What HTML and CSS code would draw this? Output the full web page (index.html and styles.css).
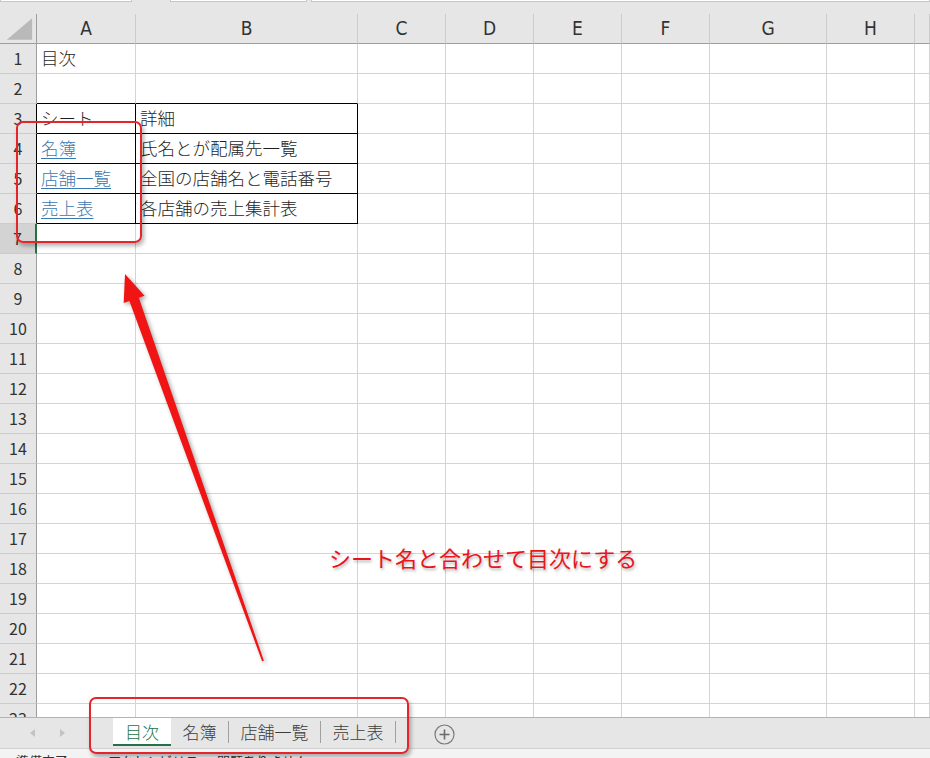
FILE: index.html
```html
<!DOCTYPE html>
<html lang="ja">
<head>
<meta charset="utf-8">
<title>目次</title>
<link rel="stylesheet" href="styles.css">
</head>
<body>
<div class="app">
  <div class="topbar">
    <div class="box name"></div>
    <div class="box fx1"></div>
    <div class="box fx2"></div>
  </div>

  <div class="sheet">
    <div class="h corner"><svg width="37" height="30" viewBox="0 0 37 30"><polygon points="33,4 33,26 7,26" fill="#b9b9b9"/></svg></div>
    <div class="h">A</div><div class="h">B</div><div class="h">C</div><div class="h">D</div><div class="h">E</div><div class="h">F</div><div class="h">G</div><div class="h">H</div><div class="h"></div>

    <div class="r">1</div><div class="c">目次</div><div class="c"></div><div class="c"></div><div class="c"></div><div class="c"></div><div class="c"></div><div class="c"></div><div class="c"></div><div class="c"></div>
    <div class="r">2</div><div class="c bb"></div><div class="c bb"></div><div class="c"></div><div class="c"></div><div class="c"></div><div class="c"></div><div class="c"></div><div class="c"></div><div class="c"></div>
    <div class="r rb">3</div><div class="c bb br">シート</div><div class="c bb br">詳細</div><div class="c"></div><div class="c"></div><div class="c"></div><div class="c"></div><div class="c"></div><div class="c"></div><div class="c"></div>
    <div class="r rb">4</div><div class="c bb br"><a class="link" href="#">名簿</a></div><div class="c bb br">氏名とが配属先一覧</div><div class="c"></div><div class="c"></div><div class="c"></div><div class="c"></div><div class="c"></div><div class="c"></div><div class="c"></div>
    <div class="r rb">5</div><div class="c bb br"><a class="link" href="#">店舗一覧</a></div><div class="c bb br">全国の店舗名と電話番号</div><div class="c"></div><div class="c"></div><div class="c"></div><div class="c"></div><div class="c"></div><div class="c"></div><div class="c"></div>
    <div class="r rb">6</div><div class="c bb br"><a class="link" href="#">売上表</a></div><div class="c bb br">各店舗の売上集計表</div><div class="c"></div><div class="c"></div><div class="c"></div><div class="c"></div><div class="c"></div><div class="c"></div><div class="c"></div>
    <div class="r sel">7</div><div class="c"></div><div class="c"></div><div class="c"></div><div class="c"></div><div class="c"></div><div class="c"></div><div class="c"></div><div class="c"></div><div class="c"></div>
    <div class="r">8</div><div class="c"></div><div class="c"></div><div class="c"></div><div class="c"></div><div class="c"></div><div class="c"></div><div class="c"></div><div class="c"></div><div class="c"></div>
    <div class="r">9</div><div class="c"></div><div class="c"></div><div class="c"></div><div class="c"></div><div class="c"></div><div class="c"></div><div class="c"></div><div class="c"></div><div class="c"></div>
    <div class="r">10</div><div class="c"></div><div class="c"></div><div class="c"></div><div class="c"></div><div class="c"></div><div class="c"></div><div class="c"></div><div class="c"></div><div class="c"></div>
    <div class="r">11</div><div class="c"></div><div class="c"></div><div class="c"></div><div class="c"></div><div class="c"></div><div class="c"></div><div class="c"></div><div class="c"></div><div class="c"></div>
    <div class="r">12</div><div class="c"></div><div class="c"></div><div class="c"></div><div class="c"></div><div class="c"></div><div class="c"></div><div class="c"></div><div class="c"></div><div class="c"></div>
    <div class="r">13</div><div class="c"></div><div class="c"></div><div class="c"></div><div class="c"></div><div class="c"></div><div class="c"></div><div class="c"></div><div class="c"></div><div class="c"></div>
    <div class="r">14</div><div class="c"></div><div class="c"></div><div class="c"></div><div class="c"></div><div class="c"></div><div class="c"></div><div class="c"></div><div class="c"></div><div class="c"></div>
    <div class="r">15</div><div class="c"></div><div class="c"></div><div class="c"></div><div class="c"></div><div class="c"></div><div class="c"></div><div class="c"></div><div class="c"></div><div class="c"></div>
    <div class="r">16</div><div class="c"></div><div class="c"></div><div class="c"></div><div class="c"></div><div class="c"></div><div class="c"></div><div class="c"></div><div class="c"></div><div class="c"></div>
    <div class="r">17</div><div class="c"></div><div class="c"></div><div class="c"></div><div class="c"></div><div class="c"></div><div class="c"></div><div class="c"></div><div class="c"></div><div class="c"></div>
    <div class="r">18</div><div class="c"></div><div class="c"></div><div class="c"></div><div class="c"></div><div class="c"></div><div class="c"></div><div class="c"></div><div class="c"></div><div class="c"></div>
    <div class="r">19</div><div class="c"></div><div class="c"></div><div class="c"></div><div class="c"></div><div class="c"></div><div class="c"></div><div class="c"></div><div class="c"></div><div class="c"></div>
    <div class="r">20</div><div class="c"></div><div class="c"></div><div class="c"></div><div class="c"></div><div class="c"></div><div class="c"></div><div class="c"></div><div class="c"></div><div class="c"></div>
    <div class="r">21</div><div class="c"></div><div class="c"></div><div class="c"></div><div class="c"></div><div class="c"></div><div class="c"></div><div class="c"></div><div class="c"></div><div class="c"></div>
    <div class="r">22</div><div class="c"></div><div class="c"></div><div class="c"></div><div class="c"></div><div class="c"></div><div class="c"></div><div class="c"></div><div class="c"></div><div class="c"></div>
    <div class="r">23</div><div class="c"></div><div class="c"></div><div class="c"></div><div class="c"></div><div class="c"></div><div class="c"></div><div class="c"></div><div class="c"></div><div class="c"></div>
  </div>

  <div class="tabbar">
    <div class="nav"><span class="tri left"></span><span class="tri right"></span></div>
    <div class="tabs">
      <div class="tab active">目次</div>
      <div class="tab">名簿</div><div class="sep"></div>
      <div class="tab">店舗一覧</div><div class="sep"></div>
      <div class="tab">売上表</div><div class="sep"></div>
    </div>
    <div class="add"><svg width="21" height="21" viewBox="0 0 21 21"><circle cx="10.5" cy="10.5" r="9.5" fill="none" stroke="#7a7a7a" stroke-width="1.2"/><path d="M10.5 5.5v10M5.5 10.5h10" stroke="#6a6a6a" stroke-width="1.6"/></svg></div>
  </div>

  <div class="status"><span class="st1">準備完了</span><span class="st2">アクセシビリティ: 問題ありません</span></div>

  <svg class="arrow" width="930" height="758" viewBox="0 0 930 758">
    <polygon points="125,274 144.5,295.7 138.8,297.7 263.9,660.7 262.1,661.3 129.4,301.1 123.7,303.1" fill="#f01414"/>
  </svg>
  <div class="callout c1"></div>
  <div class="callout c2"></div>
  <div class="note">シート名と合わせて目次にする</div>
</div>
</body>
</html>
```

FILE: styles.css
```css
* { box-sizing: border-box; }
html, body { margin: 0; padding: 0; }
body {
  width: 930px;
  height: 758px;
  overflow: hidden;
  background: #e6e6e6;
  font-family: "Noto Sans CJK JP", "Noto Sans", sans-serif;
}
.app {
  position: relative;
  display: flex;
  flex-direction: column;
  height: 758px;
}

/* top formula strip */
.topbar {
  height: 14px;
  display: flex;
  background: #e6e6e6;
}
.box {
  height: 2px;
  background: #fff;
  border: 1px solid #c6c6c6;
  border-top: none;
}
.name { width: 132px; }
.fx1 { width: 137px; margin-left: 38px; }
.fx2 { flex: 1; margin-left: 4px; }

/* sheet grid */
.sheet {
  height: 703px;
  overflow: hidden;
  display: grid;
  grid-template-columns: 37px 99px 222px 88px 88px 88px 88px 117px 88px 1fr;
  grid-auto-rows: 30px;
  align-content: start;
  background: #fff;
}
.h {
  background: #e6e6e6;
  border-right: 1px solid #cbcbcb;
  border-bottom: 1px solid #9e9e9e;
  display: flex;
  align-items: center;
  justify-content: center;
  font-family: "Liberation Sans Narrow", "DejaVu Sans Condensed", "Liberation Sans", sans-serif;
  font-size: 19px;
  color: #333;
  padding-bottom: 1px;
}
.corner { border-right-color: #9e9e9e; padding: 0; }
.corner svg { display: block; }
.r {
  background: #e6e6e6;
  border-right: 1px solid #9e9e9e;
  border-bottom: 1px solid #cbcbcb;
  display: flex;
  align-items: center;
  justify-content: center;
  font-size: 16px;
  color: #333;
  padding-bottom: 1px;
}
.r.rb { border-right-color: #000; }
.r.sel { background: #d3d3d3; border-right-color: #217346; border-right-width: 2px; }
.c {
  border-right: 1px solid #d4d4d4;
  border-bottom: 1px solid #d4d4d4;
  display: flex;
  align-items: center;
  padding: 0 0 2px 4px;
  font-size: 17.5px;
  font-weight: 300;
  color: #1e1e1e;
  white-space: nowrap;
}
.c.bb { border-bottom-color: #000; }
.c.br { border-right-color: #000; }
.link {
  color: #3a78b2;
  text-decoration: underline;
  text-underline-offset: 3px;
}

/* sheet tabs */
.tabbar {
  height: 32px;
  border-top: 1px solid #b3b3b3;
  border-bottom: 1px solid #d2d2d2;
  background: #e6e6e6;
  display: flex;
  align-items: flex-start;
}
.nav {
  width: 113px;
  height: 30px;
  display: flex;
  align-items: center;
  padding-left: 30px;
  gap: 25px;
}
.tri {
  width: 0;
  height: 0;
  border-top: 4px solid transparent;
  border-bottom: 4px solid transparent;
}
.tri.left { border-right: 5px solid #c3c3c3; }
.tri.right { border-left: 5px solid #c3c3c3; }
.tabs {
  display: flex;
  align-items: flex-start;
}
.tab {
  height: 28px;
  display: flex;
  align-items: center;
  padding: 0 11.5px 1px;
  font-size: 17px;
  font-weight: 300;
  color: #3c3c3c;
}
.tab.active {
  background: #fff;
  color: #217346;
  border-bottom: 2px solid #217346;
  padding: 0 12px;
}
.sep {
  width: 1px;
  height: 22px;
  margin-top: 3px;
  background: #a0a0a0;
}
.add {
  margin-left: 38px;
  margin-top: 6px;
}
.add svg { display: block; }

/* status bar */
.status {
  height: 9px;
  overflow: hidden;
  background: #f3f3f3;
  font-size: 13px;
  line-height: 23px;
  color: #333;
  padding-left: 16px;
  white-space: nowrap;
}
.st2 { margin-left: 40px; }

/* annotations */
.arrow {
  position: absolute;
  left: 0;
  top: 0;
  filter: drop-shadow(2px 2px 2px rgba(0,0,0,0.35));
}
.callout {
  position: absolute;
  border: 2px solid #e2262c;
  border-radius: 7px;
  box-shadow: 2px 3px 4px rgba(0,0,0,0.3);
}
.c1 { left: 16px; top: 121px; width: 126px; height: 122px; }
.c2 { left: 89px; top: 697px; width: 320px; height: 57px; }
.note {
  position: absolute;
  left: 329px;
  top: 542px;
  font-size: 22px;
  line-height: 30px;
  color: #e8161c;
  text-shadow: 1px 2px 3px rgba(0,0,0,0.3);
  white-space: nowrap;
}
```
